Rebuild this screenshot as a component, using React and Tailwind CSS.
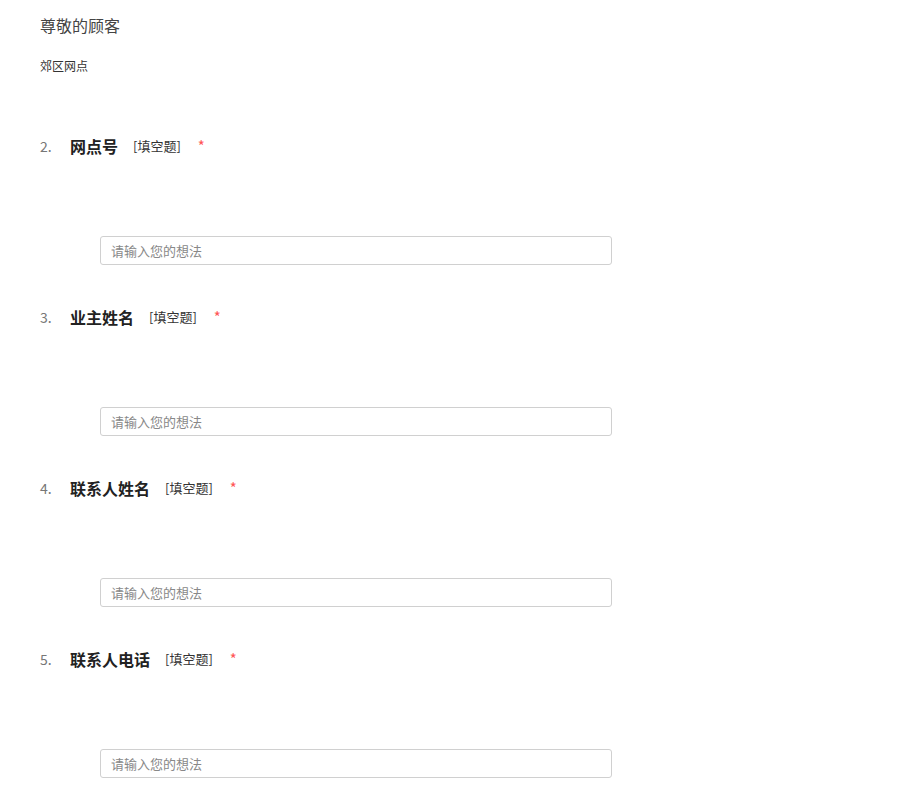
import React from 'react';

const questions = [
  { no: 2, title: '网点号' },
  { no: 3, title: '业主姓名' },
  { no: 4, title: '联系人姓名' },
  { no: 5, title: '联系人电话' },
];

const Question = ({ no, title }) => (
  <div className="flex flex-col">
    <div className="flex items-center h-6">
      <span className="w-[30px] text-[14px] text-[#777]">{no}.</span>
      <span className="text-[16px] font-bold text-[#222]">{title}</span>
      <span className="ml-[15px] text-[13px] text-[#333]">[填空题]</span>
      <span className="ml-[17px] text-[15px] text-[#f55]">*</span>
    </div>
    <div className="pl-[60px] mt-[78px]">
      <input
        type="text"
        placeholder="请输入您的想法"
        className="w-[512px] h-[29px] border border-[#d0d0d0] rounded-[3px] px-[10px] text-[13px] text-[#333] placeholder:text-[#888] outline-none"
      />
    </div>
  </div>
);

export default function App() {
  return (
    <div
      className="w-[900px] h-[800px] bg-white pl-10 pt-[13px] overflow-hidden"
      style={{ fontFamily: '"Microsoft YaHei", "Noto Sans CJK SC", sans-serif' }}
    >
      <p className="text-[16px] leading-6 text-[#444]">尊敬的顾客</p>
      <p className="mt-5 text-[12px] leading-[18px] text-[#333]">郊区网点</p>
      <div className="mt-[59px] flex flex-col gap-10">
        {questions.map((q) => (
          <Question key={q.no} {...q} />
        ))}
      </div>
    </div>
  );
}
